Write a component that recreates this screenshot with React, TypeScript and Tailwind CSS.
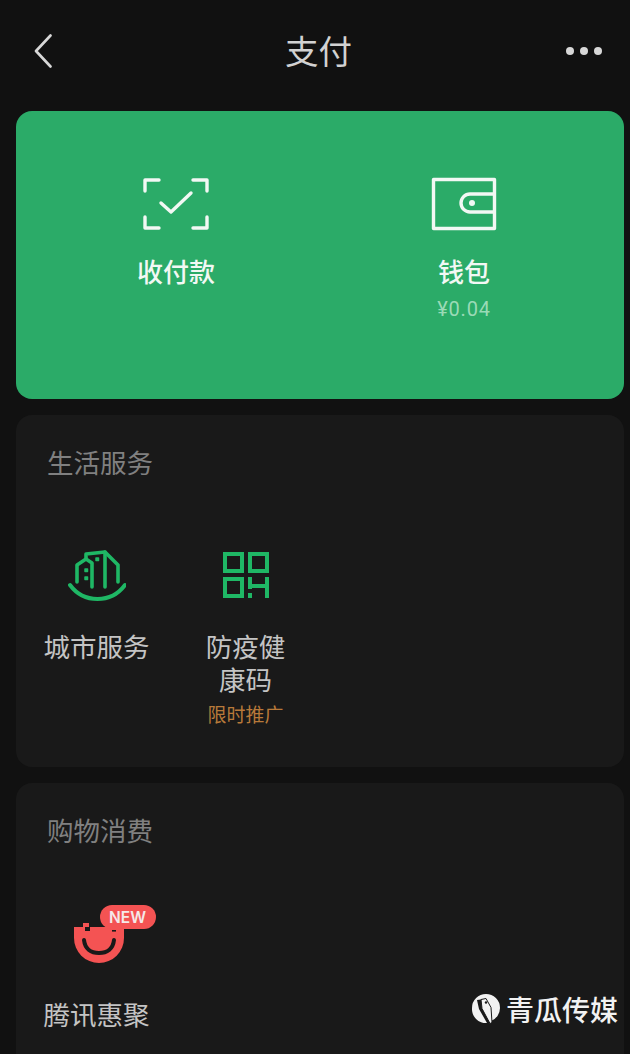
const CJK = "font-['Noto_Sans_CJK_SC','Noto_Sans',sans-serif]";

function ScanIcon() {
  return (
    <svg width="68" height="54" viewBox="0 0 68 54" fill="none" stroke="currentColor" strokeWidth="3.4" strokeLinecap="round" strokeLinejoin="round">
      <path d="M3 14V3h14M51 3h14v11M3 40v11h14M51 51h14V40" />
      <path d="M19 26l10 9 20-19" />
    </svg>
  );
}

function WalletIcon() {
  return (
    <svg width="66" height="54" viewBox="0 0 66 54" fill="none" stroke="currentColor" strokeWidth="3.4" strokeLinejoin="round">
      <path d="M2.5 2.5h61v49h-61z" />
      <path d="M63.5 17h-24.5a9 9 0 0 0 0 18h24.5" />
      <circle cx="41" cy="26" r="3" fill="currentColor" stroke="none" />
    </svg>
  );
}

function CityIcon() {
  return (
    <svg width="58" height="52" viewBox="0 0 58 52" fill="none" stroke="#1fb765" strokeWidth="3.6" strokeLinejoin="round" strokeLinecap="round">
      <path d="M9 33V16L18 10V5L37 3L50 16V33" />
      <path d="M18 10L24 14V38" />
      <path d="M37 3V38" />
      <path d="M2 36C9 45.5 18 50 29.5 50S50 45.5 57 36" strokeWidth="4" />
      <path d="M17 20h2.5v2.5H17zM17 28h2.5v2.5H17zM28 9h2.5v2.5H28z" fill="#1fb765" strokeWidth="1.5" />
    </svg>
  );
}

function QrIcon() {
  return (
    <svg width="46" height="46" viewBox="0 0 46 46" fill="none" stroke="#1fb765" strokeWidth="4">
      <path d="M2 2h17v17H2zM27 2h17v17H27zM2 27h17v17H2z" />
      <path d="M27 25v12M27 41v5M44 25v21M27 34h17" />
    </svg>
  );
}

function SmileIcon() {
  return (
    <svg width="50" height="40" viewBox="0 0 50 40" className="block">
      <path d="M0 4h50v11a25 25 0 0 1-50 0z" fill="#f45353" />
      <rect x="9" y="0" width="6" height="4" fill="#f45353" />
      <rect x="11" y="4" width="5" height="4" fill="#191919" />
      <rect x="38" y="7" width="4" height="1.6" fill="#191919" />
      <path d="M10 17c1 9 7 13 15 13s14-4 15-13" fill="none" stroke="#191919" strokeWidth="4" strokeLinecap="round" />
    </svg>
  );
}

function WatermarkIcon() {
  return (
    <svg width="29" height="32" viewBox="0 0 29 32">
      <path d="M14 1a14 14 0 0 1 14 14 14 14 0 0 1-9 13l-1-14-5-8-8 1 2 9 8 14A14 14 0 0 1 0 15 14 14 0 0 1 14 1z" fill="#f2f2f2" />
      <path d="M9 6.5l5-1 5 9 1 15-2 1-8-15z" fill="#f2f2f2" stroke="#191919" strokeWidth="1" />
      <circle cx="14" cy="9.5" r="1.2" fill="#191919" />
    </svg>
  );
}

function ServiceItem({ icon, label, note }: { icon: React.ReactNode; label: React.ReactNode; note?: string }) {
  return (
    <div className="flex w-[149px] flex-col items-center text-center">
      <div className="flex h-[52px] items-center justify-center">{icon}</div>
      <div className="mt-[28px] w-[112px] text-[26.5px] leading-[33px] text-[#c4c4c4]">{label}</div>
      {note && <div className="mt-[6px] text-[19px] leading-[26px] text-[#b8793a]">{note}</div>}
    </div>
  );
}

export default function App() {
  return (
    <div className={`relative h-[1054px] w-[630px] overflow-hidden bg-[#111111] ${CJK}`}>
      <header className="grid h-[111px] grid-cols-[1fr_auto_1fr] items-start pr-[28px] pl-[34px] pt-[34px]">
        <svg width="18" height="34" viewBox="0 0 18 34" fill="none" stroke="#d8d8d8" strokeWidth="2.6" strokeLinecap="round" strokeLinejoin="round">
          <path d="M16.5 1.5L2 17l14.5 15.5" />
        </svg>
        <h1 className="-mt-[3px] ml-[1px] text-[33.5px] leading-[38px] font-normal text-[#d2d2d2]">支付</h1>
        <div className="flex justify-end gap-[6px] pt-[13px]">
          <span className="size-[8px] rounded-full bg-[#d8d8d8]" />
          <span className="size-[8px] rounded-full bg-[#d8d8d8]" />
          <span className="size-[8px] rounded-full bg-[#d8d8d8]" />
        </div>
      </header>

      <div className="flex flex-col gap-4 pr-[6px] pl-4">
        <section className="flex h-[288px] rounded-[16px] bg-[#2bab68] pt-[66px] pl-[84px] text-[#f2f8f4]">
          <div className="flex w-[152px] flex-col items-center">
            <ScanIcon />
            <div className="mt-[22px] text-[26px] leading-[36px] font-medium">收付款</div>
          </div>
          <div className="ml-[172px] flex w-[80px] flex-col items-center">
            <WalletIcon />
            <div className="mt-[22px] text-[26px] leading-[36px] font-medium">钱包</div>
            <div className="mt-[8px] font-['Roboto',sans-serif] text-[20px] leading-[24px] tracking-[0.8px] text-[#9adab6]">¥0.04</div>
          </div>
        </section>

        <section className="h-[352px] rounded-[16px] bg-[#191919] px-[6px] pt-[28px]">
          <h2 className="pl-[25px] text-[26.5px] leading-[38px] font-normal text-[#808080]">生活服务</h2>
          <div className="mt-[68px] flex">
            <ServiceItem icon={<CityIcon />} label="城市服务" />
            <ServiceItem icon={<QrIcon />} label={<>防疫健<br />康码</>} note="限时推广" />
          </div>
        </section>

        <section className="h-[300px] rounded-[16px] bg-[#191919] px-[6px] pt-[28px]">
          <h2 className="pl-[25px] text-[26.5px] leading-[38px] font-normal text-[#808080]">购物消费</h2>
          <div className="mt-[68px] flex">
            <ServiceItem
              icon={
                <div className="relative ml-[4px]">
                  <SmileIcon />
                  <span className="absolute -top-[18px] left-[26px] flex h-[24px] w-[56px] items-center justify-center rounded-full bg-[#f45353] pt-[1px] font-['Inter',sans-serif] text-[15.5px] font-semibold text-[#f5e9e9]">NEW</span>
                </div>
              }
              label="腾讯惠聚"
            />
          </div>
        </section>
      </div>

      <div className="absolute top-[992px] left-[472px] flex items-center gap-[5px]">
        <WatermarkIcon />
        <span className="text-[28px] leading-[34px] font-medium text-[#f2f2f2]">青瓜传媒</span>
      </div>
    </div>
  );
}
